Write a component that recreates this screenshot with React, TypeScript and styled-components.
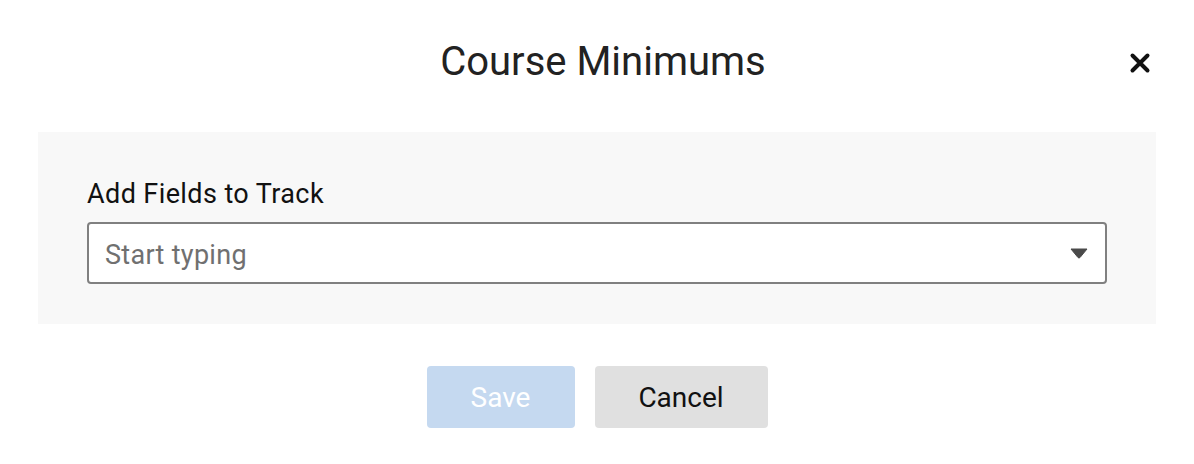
import styled, { createGlobalStyle } from "styled-components";

const GlobalStyle = createGlobalStyle`
  * { box-sizing: border-box; }
  body {
    margin: 0;
    background: #ffffff;
    font-family: Roboto, "Liberation Sans", sans-serif;
  }
`;

const App: React.FC = () => {
  return (
    <>
      <GlobalStyle />
      <Modal>
        <Header>
          <Title>Course Minimums</Title>
          <CloseButton aria-label="Close">
            <svg width="22" height="22" viewBox="0 0 22 22">
              <path
                d="M3.5 3.5 L18.5 18.5 M18.5 3.5 L3.5 18.5"
                stroke="#111"
                strokeWidth="4"
                strokeLinecap="round"
              />
            </svg>
          </CloseButton>
        </Header>
        <Body>
          <Label htmlFor="fields">Add Fields to Track</Label>
          <SelectBox>
            <Input id="fields" placeholder="Start typing" />
            <Caret>
              <svg width="18" height="11" viewBox="0 0 18 11">
                <path d="M1 1 H17 L10 9.5 Q9 10.5 8 9.5 Z" fill="#4a4a4a" stroke="#4a4a4a" strokeLinejoin="round" />
              </svg>
            </Caret>
          </SelectBox>
        </Body>
        <Footer>
          <Button $variant="primary" disabled>
            Save
          </Button>
          <Button $variant="secondary">Cancel</Button>
        </Footer>
      </Modal>
    </>
  );
};

export default App;

const Modal = styled.div`
  width: 1194px;
  height: 464px;
  padding: 0 38px;
  display: flex;
  flex-direction: column;
`;

const Header = styled.div`
  position: relative;
  height: 132px;
  display: flex;
  align-items: center;
  justify-content: center;
  padding-bottom: 10px;
`;

const Title = styled.h1`
  margin: 0 0 0 12px;
  font-size: 40px;
  font-weight: 400;
  color: #222;
`;

const CloseButton = styled.button`
  position: absolute;
  right: 3px;
  top: 50px;
  width: 26px;
  height: 26px;
  padding: 0;
  border: none;
  background: none;
  display: flex;
  align-items: center;
  justify-content: center;
  cursor: pointer;
`;

const Body = styled.div`
  background: #f8f8f8;
  padding: 46px 49px 40px;
  display: flex;
  flex-direction: column;
`;

const Label = styled.label`
  font-size: 27px;
  letter-spacing: 0.4px;
  color: #111;
  line-height: 32px;
  margin-bottom: 12px;
`;

const SelectBox = styled.div`
  position: relative;
  height: 62px;
  border: 2px solid #808080;
  border-radius: 4px;
  background: #fff;
  display: flex;
  align-items: center;
`;

const Input = styled.input`
  flex: 1;
  height: 100%;
  border: none;
  outline: none;
  background: transparent;
  padding: 3px 16px 0;
  font-family: inherit;
  font-size: 27px;
  letter-spacing: 0.3px;
  color: #222;

  &::placeholder {
    color: #707070;
  }
`;

const Caret = styled.span`
  display: flex;
  margin-right: 17px;
`;

const Footer = styled.div`
  display: flex;
  justify-content: center;
  gap: 20px;
  padding-top: 42px;
`;

const Button = styled.button<{ $variant: "primary" | "secondary" }>`
  height: 62px;
  padding: 0 40px;
  border: none;
  border-radius: 4px;
  font-family: inherit;
  font-size: 28px;
  background: ${({ $variant }) => ($variant === "primary" ? "#c5d9f0" : "#e0e0e0")};
  color: ${({ $variant }) => ($variant === "primary" ? "#ffffff" : "#111")};
  min-width: ${({ $variant }) => ($variant === "primary" ? "148px" : "173px")};
`;
